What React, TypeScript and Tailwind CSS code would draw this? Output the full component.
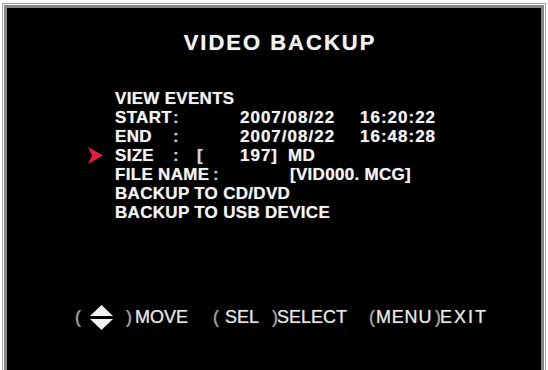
import React from "react";

const font = "font-['Liberation_Sans',Arial,sans-serif]";

function Row({ arrow, children }: { arrow?: boolean; children: React.ReactNode }) {
  return (
    <div className="flex h-[19px] items-center whitespace-pre">
      <span className="flex w-[27px] flex-none items-center">
        {arrow ? (
          <svg width="15" height="17" viewBox="0 0 15 17" className="blur-[0.5px]">
            <polygon points="0,0 15,8.5 0,17 4,8.5" fill="#e2203e" />
          </svg>
        ) : null}
      </span>
      {children}
    </div>
  );
}

export default function App() {
  return (
    <div className={`flex h-[370px] w-[548px] flex-col bg-white pt-[3px] px-[2px] ${font}`}>
      <div className="flex flex-1 flex-col border-x border-t border-[#a4a4a4] bg-white px-[1px] pt-[1px]">
        <div className="flex flex-1 flex-col border-x-[3px] border-t-[3px] border-[#858585] bg-black text-[#f2f2f2] [text-shadow:0_0_1px_rgba(255,255,255,0.6)]">
          <div className="flex justify-center pl-[12px] pt-[24px]">
            <span className="text-[22px] font-bold leading-[22px] tracking-[2px]">VIDEO BACKUP</span>
          </div>

          <div className="mt-[35px] flex flex-col pl-[81px] text-[17px] font-bold leading-[19px] tracking-[0.3px]">
            <Row>
              <span>VIEW EVENTS</span>
            </Row>
            <Row>
              <span className="w-[58px] flex-none">START</span>
              <span className="w-[67px] flex-none text-[#c8c8c8]">:</span>
              <span className="w-[120px] flex-none tracking-[1px]">2007/08/22</span>
              <span className="tracking-[1px]">16:20:22</span>
            </Row>
            <Row>
              <span className="w-[58px] flex-none">END</span>
              <span className="w-[67px] flex-none text-[#c8c8c8]">:</span>
              <span className="w-[120px] flex-none tracking-[1px]">2007/08/22</span>
              <span className="tracking-[1px]">16:48:28</span>
            </Row>
            <Row arrow>
              <span className="w-[58px] flex-none">SIZE</span>
              <span className="w-[24px] flex-none text-[#c8c8c8]">:</span>
              <span className="w-[43px] flex-none text-[#d8d8d8]">[</span>
              <span className="w-[48px] flex-none tracking-[1px]">197]</span>
              <span>MD</span>
            </Row>
            <Row>
              <span className="w-[98px] flex-none">FILE NAME</span>
              <span className="w-[77px] flex-none text-[#c8c8c8]">:</span>
              <span>[VID000. MCG]</span>
            </Row>
            <Row>
              <span>BACKUP TO CD/DVD</span>
            </Row>
            <Row>
              <span>BACKUP TO USB DEVICE</span>
            </Row>
          </div>

          <div className="mt-[86px] flex h-[18px] items-center whitespace-pre pl-[68px] text-[18px] leading-[18px] text-[#e6e6e6]">
            <span className="w-[15px] flex-none text-[#9c9c9c]">(</span>
            <span className="flex w-[36px] flex-none items-center">
              <svg width="23" height="25" viewBox="0 0 23 25">
                <polygon points="11.5,0 23,11 0,11" fill="#f4f4f4" />
                <polygon points="0,14 23,14 11.5,25" fill="#f4f4f4" />
              </svg>
            </span>
            <span className="w-[9px] flex-none text-[#9c9c9c]">)</span>
            <span className="w-[78px] flex-none">MOVE</span>
            <span className="w-[12px] flex-none text-[#9c9c9c]">(</span>
            <span className="w-[47px] flex-none">SEL</span>
            <span className="w-[5px] flex-none text-[#9c9c9c]">)</span>
            <span className="w-[92px] flex-none">SELECT</span>
            <span className="w-[7px] flex-none text-[#9c9c9c]">(</span>
            <span className="w-[59px] flex-none tracking-[0.8px]">MENU</span>
            <span className="w-[5px] flex-none text-[#9c9c9c]">)</span>
            <span className="tracking-[2px]">EXIT</span>
          </div>
        </div>
      </div>
    </div>
  );
}
